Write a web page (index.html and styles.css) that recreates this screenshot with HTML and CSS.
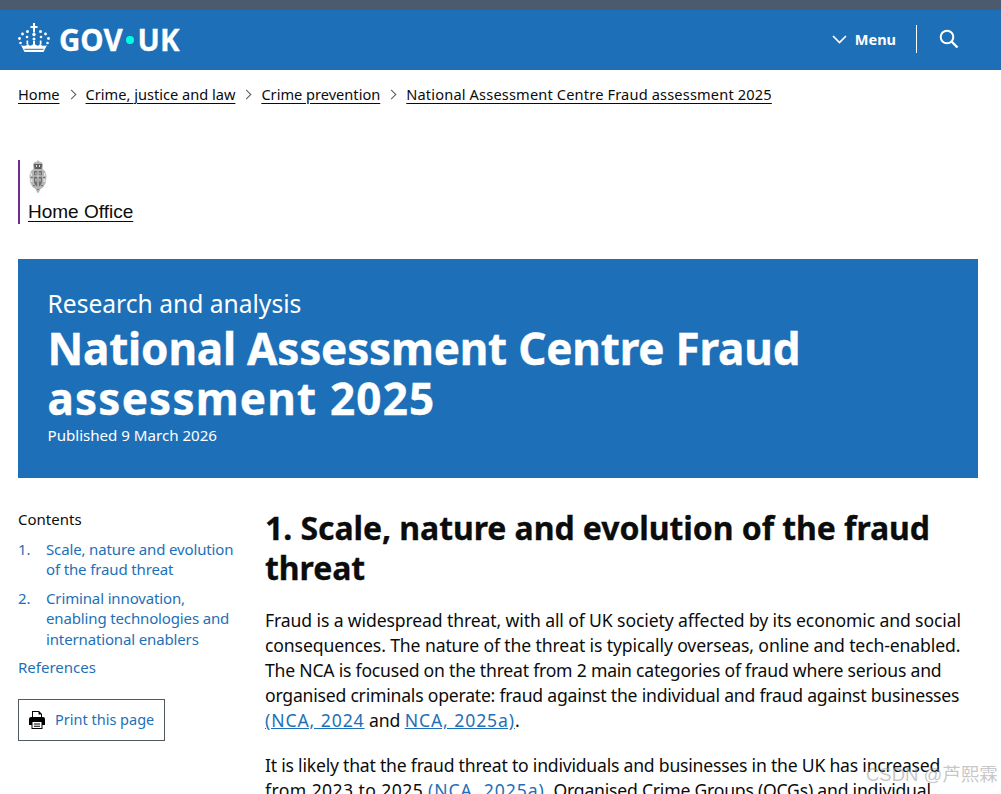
FILE: index.html
```html
<!DOCTYPE html>
<html lang="en">
<head>
<meta charset="utf-8">
<title>National Assessment Centre Fraud assessment 2025</title>
<link rel="stylesheet" href="styles.css">
</head>
<body>
<div class="topbar"></div>
<header class="header">
  <a class="logo" href="#">
    <svg class="crown" viewBox="0 0 32 30" width="32" height="30" aria-hidden="true">
      <g fill="#fff">
        <path d="M15 0h2v3h2.500v2H17v4.500h-2V5h-2.500V3H15z"/>
        <circle cx="16" cy="11.500" r="1.700"/><circle cx="9.500" cy="8.500" r="1.500"/><circle cx="22.500" cy="8.500" r="1.500"/>
        <circle cx="4.500" cy="11" r="1.400"/><circle cx="27.500" cy="11" r="1.400"/>
        <circle cx="1.500" cy="15.500" r="1.400"/><circle cx="30.500" cy="15.500" r="1.400"/>
        <circle cx="2.500" cy="20" r="1.300"/><circle cx="29.500" cy="20" r="1.300"/>
        <circle cx="16" cy="16" r="1.500"/><circle cx="9" cy="14" r="1.300"/><circle cx="23" cy="14" r="1.300"/>
        <path d="M15 18h2v3.500h-2zM8.500 17.500h1.700v4H8.500zM21.800 17.500h1.700v4h-1.700z"/>
        <path d="M3 22c3 1.500 5 1 7-1 1 1.500 2 2 3 1.500 1-.5 2-1 3-2.500 1 1.500 2 2 3 2.500 1 .5 2 0 3-1.500 2 2 4 2.500 7 1l-3.500 7H6.500z"/>
      </g>
      <path d="M6.500 26.300h19" stroke="#1d70b8" stroke-width="1"/>
    </svg>
    <span class="wordmark">GOV<span class="dot"></span>UK</span>
  </a>
  <nav class="header-nav">
    <a class="menu" href="#">
      <svg width="15" height="9" viewBox="0 0 15 9" aria-hidden="true"><path d="M1 1l6.500 6.500L14 1" fill="none" stroke="#fff" stroke-width="1.700"/></svg>
      <span>Menu</span>
    </a>
    <span class="divider"></span>
    <a class="search" href="#" aria-label="Search">
      <svg width="20" height="20" viewBox="0 0 20 20" aria-hidden="true"><circle cx="8" cy="8" r="6.300" fill="none" stroke="#fff" stroke-width="2"/><path d="M12.500 12.500l6 6" stroke="#fff" stroke-width="2.400"/></svg>
    </a>
  </nav>
</header>

<nav class="breadcrumbs">
  <a href="#">Home</a><span class="chev"></span>
  <a href="#">Crime, justice and law</a><span class="chev"></span>
  <a href="#">Crime prevention</a><span class="chev"></span>
  <a class="last" href="#">National Assessment Centre Fraud assessment 2025</a>
</nav>

<div class="org">
  <svg class="arms" viewBox="0 0 20 34" width="20" height="34" aria-hidden="true">
    <path d="M10 0l1 1.500 3 1 1 2-.5 4.500 2.500 2 1.500 4.500-.5 6.500-2.500 5-3 2-1.500 3-1 1.500-1-1.500-1.500-3-3-2-2.500-5-.5-6.500L3 11l2.500-2L5 4.500l1-2 3-1z" fill="#b5b5b5"/>
    <path d="M6 4h8l-.5 5h-7z" fill="#5e5e5e"/>
    <path d="M6 11h8v10q0 4-4 6-4-2-4-6z" fill="#6e6e6e"/>
    <path d="M9.500 11h1v16h-1zM6 15.500h8v1H6zM2.500 13h1.500v3H2.500zM16 13h1.500v3H16zM2.500 19h2v3h-2zM15.500 19h2v3h-2zM8 5h1v2H8zM11 5h1v2h-1zM7.500 12.500h1v2h-1zM11.500 12.500h1v2h-1zM7.500 18.500h1v3h-1zM11.500 18.500h1v3h-1z" fill="#e2e2e2"/>
    <path d="M3 17h2v1H3zM15 17h2v1h-2zM5 25h2v1H5zM13 25h2v1h-2zM9 29h2v1H9z" fill="#777"/>
  </svg>
  <a href="#">Home Office</a>
</div>

<section class="banner">
  <p class="caption">Research and analysis</p>
  <h1>National Assessment Centre Fraud<br><span class="wide">assessment 2025</span></h1>
  <p class="published">Published 9 March 2026</p>
</section>

<div class="main">
  <aside class="sidebar">
    <h2 class="contents-title">Contents</h2>
    <ol class="contents">
      <li><span class="num">1.</span><a href="#">Scale, nature and evolution<br>of the fraud threat</a></li>
      <li><span class="num">2.</span><a href="#">Criminal innovation,<br>enabling technologies and<br>international enablers</a></li>
    </ol>
    <a class="refs" href="#">References</a>
    <a class="print" href="#">
      <svg width="16" height="18" viewBox="0 0 16 18" aria-hidden="true">
        <path d="M3 0h7l3 3v5H3z" fill="#000"/>
        <path d="M4 1h5.500v2.500H12V7H4z" fill="#fff"/>
        <path d="M2 6h12a2 2 0 0 1 2 2v6h-3V11H3v3H0V8a2 2 0 0 1 2-2z" fill="#000"/>
        <path d="M2.500 10h11v8h-11z" fill="#000"/>
        <path d="M3.500 11h9v6h-9z" fill="#fff"/>
        <path d="M5 12.500h6v1H5zM5 14.700h6v1H5z" fill="#000"/>
      </svg>
      <span>Print this page</span>
    </a>
  </aside>
  <article class="content">
    <h2>1. Scale, nature and evolution of the fraud<br>threat</h2>
    <p>Fraud is a widespread threat, with all of UK society affected by its economic and social<br>consequences. The nature of the threat is typically overseas, online and tech-enabled.<br><span class="tight">The NCA is focused on the threat from 2 main categories of fraud where serious and</span><br><span class="tight">organised criminals operate: fraud against the individual and fraud against businesses</span><br><a href="#">(NCA, 2024</a> and <a href="#">NCA, 2025a)</a>.</p>
    <p><span class="tight">It is likely that the fraud threat to individuals and businesses in the UK has increased</span><br><span class="spread">from 2023 to 2025 </span><a href="#">(NCA, 2025a)</a><span class="tight">. Organised Crime Groups (OCGs) and individual</span></p>
  </article>
</div>
<div class="watermark">CSDN @芦熙霖</div>
</body>
</html>
```
FILE: styles.css
```css
* { box-sizing: border-box; }
html, body { margin: 0; padding: 0; height: 794px; overflow: hidden; background: #fff; }
body { font-family: "Noto Sans", "Open Sans", sans-serif; color: #0b0c0c; position: relative; }
a { color: #1d70b8; }
h1, h2, p, ol { margin: 0; padding: 0; }
.topbar { height: 10px; background: #4c5a6e; }
.header { height: 60px; background: #1d70b8; display: flex; align-items: center; justify-content: space-between; padding: 0 42px 0 18px; }
.logo { display: flex; align-items: center; gap: 9px; color: #fff; text-decoration: none; }
.crown { display: block; margin-top: -4px; }
.wordmark { font-weight: 700; font-size: 29.500px; line-height: 30px; display: flex; align-items: center; -webkit-text-stroke: 0.3px #fff; }
.dot { width: 8px; height: 8px; border-radius: 50%; background: #00ffe0; margin: 0 4px 0 3px; }
.header-nav { display: flex; align-items: center; height: 28px; margin-top: -2px; }
.menu { display: flex; align-items: center; gap: 8px; color: #fff; text-decoration: none; font-weight: 700; font-size: 14.500px; padding-right: 20px; }
.divider { width: 1px; height: 28px; background: #fff; }
.search { display: block; margin-left: 22px; height: 20px; }
.breadcrumbs { display: flex; align-items: center; padding: 15px 18px 0; font-size: 14.600px; line-height: 18px; }
.breadcrumbs a { color: #0b0c0c; text-underline-offset: 3px; }
.breadcrumbs .last { letter-spacing: 0.160px; }
.chev { width: 7px; height: 7px; border-top: 1px solid #505a5f; border-right: 1px solid #505a5f; transform: rotate(45deg); margin: 0 11px 0 8px; }
.org { margin: 57px 0 0 18px; height: 64px; border-left: 2px solid #6f2c91; padding-left: 8px; display: flex; flex-direction: column; align-items: flex-start; }
.arms { display: block; }
.org a { font-family: "Liberation Sans", Arial, sans-serif; font-size: 19px; line-height: 22px; color: #0b0c0c; margin-top: 7px; text-decoration-thickness: 1px; text-underline-offset: 3px; }
.banner { margin: 35px 23px 0 18px; height: 219px; background: #1d70b8; color: #fff; padding: 30px 29.500px 0; }
.caption { font-size: 24.600px; line-height: 30px; }
.banner h1 { font-size: 44px; line-height: 50px; font-weight: 700; margin-top: 4px; letter-spacing: -0.200px; -webkit-text-stroke: 0.4px #fff; }
.wide { letter-spacing: 1.200px; }
.published { font-size: 15.100px; line-height: 20px; margin-top: 2px; }
.main { display: flex; padding: 31px 23px 0 18px; }
.sidebar { width: 247px; flex: none; font-size: 15px; }
.contents-title { font-size: 15px; font-weight: 400; line-height: 20px; }
.contents { list-style: none; margin-top: 10px; }
.contents li { display: flex; line-height: 20.400px; margin-bottom: 8px; letter-spacing: -0.140px; }
.contents a, .refs, .print { color: #1d70b8; text-decoration: none; }
.num { width: 28px; flex: none; color: #1d70b8; }
.refs { display: block; line-height: 20px; }
.print { display: flex; align-items: center; gap: 10px; width: 147px; height: 42px; border: 1px solid #505a5f; margin-top: 22px; padding: 0 0 2px 10px; font-size: 14.500px; }
.print svg { margin-top: 2px; }
.content { flex: 1; margin-top: -1px; }
.content h2 { font-size: 32px; line-height: 40px; font-weight: 700; letter-spacing: -0.070px; -webkit-text-stroke: 0.3px #0b0c0c; }
.content p { font-size: 17.600px; line-height: 25px; margin-top: 20px; white-space: nowrap; letter-spacing: -0.120px; }
.content p a { letter-spacing: 0.900px; }
.content .tight { letter-spacing: -0.220px; }
.content .spread { letter-spacing: 0.400px; }
.watermark { position: absolute; left: 866px; top: 764px; font-family: "Liberation Sans", "Noto Sans CJK SC", sans-serif; font-size: 18.500px; line-height: 22px; color: rgba(150,150,150,0.55); white-space: nowrap; }
```
